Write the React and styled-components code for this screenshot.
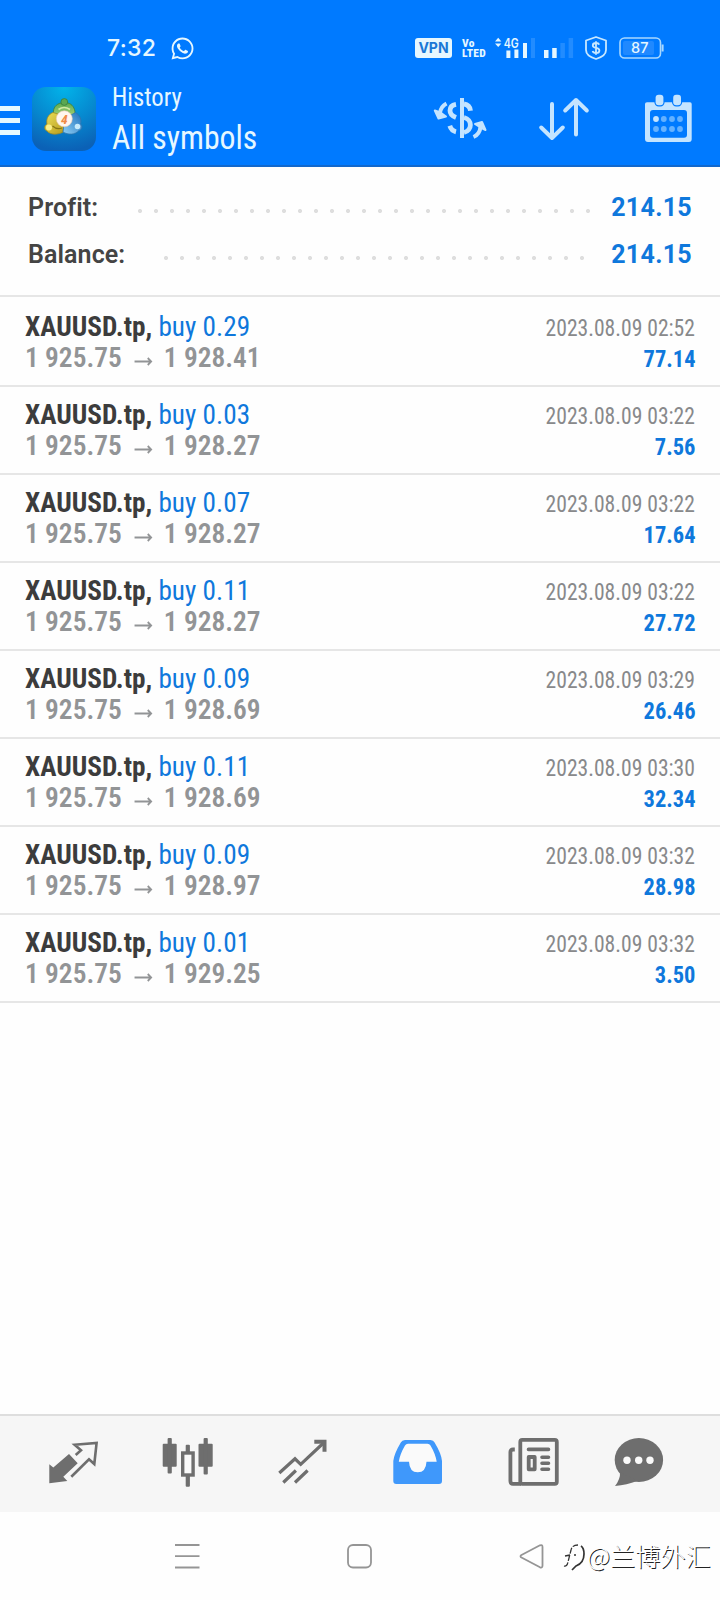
import React from 'react';
import styled, { createGlobalStyle } from 'styled-components'
import { FaWhatsapp } from 'react-icons/fa'

const GlobalStyle = createGlobalStyle`
    * {
        box-sizing: border-box;
    }

    body {
        margin: 0;
        background-color: #fefefe;
        font-family: "Roboto Condensed", Roboto, "Liberation Sans", sans-serif;
        font-stretch: 75%;
    }

    svg {
        display: block;
        flex-shrink: 0;
    }
`

const Screen = styled.div`
    width: 720px;
    height: 1600px;
    display: flex;
    flex-direction: column;
    overflow: hidden;
`

const Header = styled.header`
    height: 167px;
    background-color: #007aff;
    border-bottom: 2px solid #1268cc;
    color: #e6f7ff;
`

const StatusBar = styled.div`
    height: 84px;
    padding: 12px 56px 0 107px;
    display: flex;
    align-items: center;
    justify-content: space-between;
`

const StatusGroup = styled.div`
    display: flex;
    align-items: center;
    gap: ${props => props.gap}px;
`

const Clock = styled.span`
    font-family: Inter, sans-serif;
    font-size: 23px;
    font-weight: 500;
    line-height: 24px;
    width: 48px;
    letter-spacing: 0.3px;
    white-space: nowrap;
`

const VpnBadge = styled.span`
    width: 37px;
    height: 20px;
    border-radius: 3px;
    background-color: #e6f7ff;
    color: #1a78d6;
    font: 700 14px/20px Inter, sans-serif;
    text-align: center;
`

const Volte = styled.span`
    width: 23px;
    height: 20px;
    font-size: 11.5px;
    line-height: 10px;
    font-weight: 800;
    letter-spacing: 0.3px;
    white-space: pre;
`

const Toolbar = styled.div`
    height: 81px;
    display: flex;
    align-items: flex-start;
    padding-top: 3px;
`

const MenuButton = styled.div`
    width: 20px;
    margin-top: 19px;
    display: flex;
    flex-direction: column;
    gap: 7px;

    span {
        height: 5px;
        background-color: #e6f9ff;
    }
`

const AppLogo = styled.div`
    margin: 0 16px 0 12px;
`

const Titles = styled.div`
    flex: 1;
    display: flex;
    flex-direction: column;
`

const Subtitle = styled.span`
    font-size: 26px;
    line-height: 30px;
    margin-top: -5px;
    transform: scaleX(0.95);
    transform-origin: left;
`

const Title = styled.span`
    font-size: 34px;
    line-height: 40px;
    margin-top: 5px;
    transform: scaleX(0.935);
    transform-origin: left;
`

const Actions = styled.div`
    display: flex;
    padding: 5px 24px 0 0;
    gap: 48px;
`

const Summary = styled.section`
    height: 130px;
    padding: 17px 28px 0;
    border-bottom: 2px solid #e6e6e6;
`

const SummaryRow = styled.div`
    height: 47px;
    display: flex;
    align-items: center;
    font-family: Roboto, sans-serif;
    font-stretch: 100%;
    font-size: 25px;
    font-weight: 600;
    color: #444;
`

const SummaryLabel = styled.span`
    width: ${props => props.width}px;
    letter-spacing: 0.1px;
`

const Dots = styled.span`
    width: ${props => props.count * 16}px;
    height: 4px;
    margin-top: 7px;
    background: radial-gradient(circle at 2px 2px, #dedede 1.6px, transparent 2.4px) 0 0 / 16px 4px repeat-x;
`

const SummaryValue = styled.span`
    margin-left: auto;
    color: #0f78dc;
    font-weight: 700;
    letter-spacing: 0.3px;
`

const Deal = styled.div`
    height: ${props => props.first ? 90 : 88}px;
    padding: ${props => props.first ? 14 : 12}px 25px 0;
    border-bottom: 2px solid #e6e6e6;
    display: flex;
    justify-content: space-between;
`

const DealColumn = styled.div`
    display: flex;
    flex-direction: column;
    align-items: ${props => props.end ? 'flex-end' : 'flex-start'};
    white-space: nowrap;
`

const Symbol = styled.span`
    font-size: 28px;
    line-height: 31px;
    font-weight: 700;
    color: #3c3c3c;
    transform: scaleX(0.972);
    transform-origin: left;
`

const Volume = styled.span`
    font-weight: 400;
    color: #0f78dc;
`

const Prices = styled.span`
    font-size: 28px;
    line-height: 31px;
    font-weight: 600;
    color: #929496;
    display: flex;
    align-items: center;
    transform: scaleX(0.978);
    transform-origin: left;
`

const DealTime = styled.span`
    font-size: 24px;
    line-height: 31px;
    color: #88898b;
    margin-top: 2px;
    transform: scaleX(0.9);
    transform-origin: right;
`

const DealProfit = styled.span`
    font-size: 24px;
    line-height: 31px;
    font-weight: 700;
    color: #0f78dc;
    transform: scaleX(0.935);
    transform-origin: right;
`

const Spacer = styled.div`
    flex: 1;
`

const TabBar = styled.nav`
    height: 98px;
    background-color: #f6f6f6;
    border-top: 2px solid #dedede;
    display: grid;
    grid-template-columns: 114px 115px 115px 116px 105px auto;
    padding: 20px 0 0 48px;
`

const SystemBar = styled.div`
    height: 88px;
    padding: 29px 0 0 174px;
    display: flex;
    align-items: flex-start;
`

const SystemKey = styled.div`
    width: ${props => props.width}px;
`

const Watermark = styled.div`
    display: flex;
    margin-top: -1px;
    font: 300 25.200px/30px "Noto Sans CJK SC", sans-serif;
    color: #fff;
    text-shadow: 1px 1px 0 #222;
    white-space: nowrap;
`

const Bars = ({ levels }) => (
    <svg width="31" height="20" fill="#e6f7ff">
        <rect x="0" y="12" width="4.5" height="8" />
        <rect x="8.2" y="10" width="4.5" height="10" />
        <rect x="16.4" y="5" width="4.5" height="15" opacity={levels > 2 ? 1 : 0.15} />
        <rect x="24.6" y="0" width="4.5" height="20" opacity="0.15" />
    </svg>
)

const Network = () => (
    <svg width="39" height="22" fill="#e6f7ff" overflow="visible">
        <path d="M0 4.4L3.2 .8L6.4 4.4ZM0 6.4L3.2 10L6.4 6.4Z" />
        <text x="8.800" y="10.500" fontFamily="Inter, sans-serif" fontSize="12.5" fontWeight="600" textLength="15" lengthAdjust="spacingAndGlyphs">4G</text>
        <rect x="11.4" y="13.500" width="4" height="7.500" />
        <rect x="19.4" y="12.500" width="4" height="8.500" />
        <rect x="28" y="6" width="4" height="15" />
        <rect x="36" y="1" width="4" height="20" opacity="0.15" />
    </svg>
)

const Shield = () => (
    <svg width="24" height="24" fill="none" stroke="#c8e8ff" strokeWidth="1.8">
        <path d="M11 1L21 4.5V14C21 18.5 16 21.5 11 23C6 21.5 1 18.5 1 14V4.5Z" strokeLinejoin="round" />
        <path d="M14.2 8.6C13.8 7.6 12.6 7 11 7C9 7 7.8 8 7.8 9.4C7.8 13 14.4 10.8 14.4 14.4C14.4 16 13 17 11 17C9.2 17 8 16.2 7.6 15M11 5.3V18.7" />
    </svg>
)

const Battery = () => (
    <svg width="45" height="22">
        <rect x="1" y="1" width="40.5" height="20" rx="4.5" fill="none" stroke="#a8d8ff" strokeWidth="1.6" />
        <rect x="4" y="4" width="31" height="14" rx="2" fill="#2089ff" />
        <path d="M43.6 7.5V14.5" stroke="#a8d8ff" strokeWidth="2" />
        <text x="12" y="16" fontFamily="Inter, sans-serif" fontSize="14.5" fontWeight="500" fill="#e6f7ff">87</text>
    </svg>
)

const LogoIcon = () => (
    <svg width="64" height="64" viewBox="0 0 64 64">
        <defs>
            <radialGradient id="logoBg" cx="0.5" cy="0" r="1">
                <stop offset="0" stopColor="#02b4ea" />
                <stop offset="0.55" stopColor="#0688cf" />
                <stop offset="1" stopColor="#0b61b6" />
            </radialGradient>
            <linearGradient id="green" x1="0" y1="0" x2="0" y2="1">
                <stop offset="0" stopColor="#5dab52" />
                <stop offset="1" stopColor="#b4d87a" />
            </linearGradient>
            <linearGradient id="yellow" x1="0" y1="0" x2="1" y2="1">
                <stop offset="0" stopColor="#efe25a" />
                <stop offset="1" stopColor="#b59a1c" />
            </linearGradient>
            <linearGradient id="blue" x1="0" y1="1" x2="1" y2="0">
                <stop offset="0" stopColor="#8ed0f5" />
                <stop offset="1" stopColor="#1d70bd" />
            </linearGradient>
        </defs>
        <rect width="64" height="64" rx="14" fill="url(#logoBg)" />
        <path d="M29 16C24 17 21 21 21.500 26L27 32H38L43 26C43 21 40 17 36 16Z" fill="url(#green)" stroke="#3a7d3a" strokeWidth="0.800" />
        <circle cx="32.300" cy="15" r="3.400" fill="#5aa852" stroke="#3a7d3a" strokeWidth="0.800" />
        <path d="M26.500 22.500Q32 18.500 38 22.500" fill="none" stroke="#d2eba5" strokeWidth="1.600" />
        <path d="M21 25.500C16 27.500 14 32 15 37C12 38.500 12 43 15 44C18 48 26 48 31 45L32 37L26 27Z" fill="url(#yellow)" stroke="#a08c24" strokeWidth="0.800" />
        <circle cx="17" cy="40.500" r="3" fill="#f9ef8c" />
        <path d="M20.500 39Q25 43 30 41" fill="none" stroke="#867514" strokeWidth="1.200" />
        <path d="M43.500 25.500C48 28 50 33 48.500 37C51 39 50 43 47 43.500C43 48 36 48 31 45L32 37L39 28Z" fill="url(#blue)" stroke="#2f75ad" strokeWidth="0.800" />
        <circle cx="45.500" cy="39.500" r="2.800" fill="#c6eafb" />
        <circle cx="32.300" cy="31.800" r="8" fill="#fff6ee" stroke="#e6c8b0" strokeWidth="0.600" />
        <text x="32.300" y="36.500" textAnchor="middle" fontFamily="Roboto, sans-serif" fontStyle="italic" fontSize="13.500" fontWeight="700" fill="#f08a45">4</text>
    </svg>
)

const CurrencyIcon = () => (
    <svg width="60" height="52" fill="none" stroke="#c4e4ff" strokeWidth="4.800">
        <path d="M32 6V46" strokeWidth="4" />
        <path d="M26 12.300C22 13 20 15.500 20 18.500C20 22 22 24 26 25.500M34 12C38 12.500 40 15 40.500 18.800M34 25.500C42.500 27.500 42.500 38.500 34 40.500M26 39.800C22.500 39 21 37.500 19.800 33.800" />
        <path d="M16.500 11.500C12.500 13.500 10.500 17 10 21" strokeWidth="4" />
        <path d="M4.800 18.500L8.500 26.500L16 24.500L10.500 20.500Z" fill="#c4e4ff" strokeWidth="2" strokeLinejoin="round" />
        <path d="M43.500 45C48 43 50 39.500 50.500 35" strokeWidth="4" />
        <path d="M45 32L52 30L55.500 38L50.500 35.500Z" fill="#c4e4ff" strokeWidth="2" strokeLinejoin="round" />
    </svg>
)

const SortIcon = () => (
    <svg width="58" height="52" fill="none" stroke="#c4e4ff" strokeWidth="4" strokeLinecap="round" strokeLinejoin="round">
        <path d="M14 12V46M3.200 35.500L14 46L24.800 35.500" />
        <path d="M38 42.500V8M27.200 18.500L38 8L48.800 18.500" />
    </svg>
)

const CalendarIcon = () => (
    <svg width="52" height="52">
        <path d="M3 10.300H46Q47.700 10.300 47.700 12V47Q47.700 50 45 50H4Q1 50 1 47V12Q1 10.300 3 10.300ZM9 18Q6 18 6 21V42.700Q6 45.700 9 45.700H40Q43 45.700 43 42.700V21Q43 18 40 18Z" fill="#c4e4ff" fillRule="evenodd" />
        {[11.6, 29.2].map(x => (
            <rect key={x} x={x} y="2.800" width="7.800" height="10.500" rx="3" fill="#c4e4ff" stroke="#007aff" strokeWidth="2.400" paintOrder="stroke" />
        ))}
        {[27, 37].map(y => [12, 19.8, 28, 36].map((x, i) => (
            <circle key={x + '-' + y} cx={x} cy={y} r="2.900" fill={y === 27 && i === 0 ? '#c4e4ff' : '#64b1ff'} />
        )))}
    </svg>
)

const QuotesIcon = () => (
    <svg width="52" height="52">
        <path d="M1.300 28.300V47.300L19.300 45L15.300 40.700L29.700 27.300L21 18L5.300 31.500Z" fill="#6e6e6e" />
        <path d="M27.700 19L33 14.300L26.600 8.700L48.600 6.900L46.300 28L41 23.300L23.300 40.700" fill="none" stroke="#6e6e6e" strokeWidth="2.600" />
    </svg>
)

const ChartIcon = () => (
    <svg width="52" height="52" fill="#6e6e6e">
        <rect x="0.700" y="7.700" width="14" height="23" rx="1" />
        <rect x="5.600" y="2" width="4.200" height="35.500" rx="1" />
        <rect x="23.700" y="8.700" width="4.200" height="42" rx="1" />
        <rect x="20.700" y="17" width="10.400" height="22" fill="#fafafa" stroke="#6e6e6e" strokeWidth="3.400" />
        <rect x="36.500" y="7.700" width="14.200" height="23" rx="1" />
        <rect x="41.600" y="2" width="4.200" height="36.500" rx="1" />
    </svg>
)

const TradeIcon = () => (
    <svg width="52" height="52" fill="none" stroke="#6e6e6e" strokeWidth="3.200">
        <path d="M2.300 37L18 22.800L23.700 28.300L47 6.500M6.300 46.500L18.900 34.500M18 46.500L30.600 34.500" />
        <path d="M37.300 5.800H47.500V15.800" strokeWidth="4" />
    </svg>
)

const HistoryIcon = () => (
    <svg width="52" height="52">
        <path d="M13 4H38.500Q41.500 4 42.600 6.500Q49.500 18 50 25V45Q50 48 47 48H4.300Q1.300 48 1.300 45V25Q2 18 8.800 6.500Q10 4 13 4Z" fill="#3f98fb" />
        <path d="M16 7.700H35.500Q37.500 7.700 38.500 9.500Q43.500 18 44.700 25.700H34.500Q34 36.300 25.700 36.300Q17.500 36.300 17 25.700H6.800Q8 18 13 9.500Q14 7.700 16 7.700Z" fill="#fafafa" />
    </svg>
)

const NewsIcon = () => (
    <svg width="52" height="52" fill="none" stroke="#6e6e6e" strokeWidth="3.800" strokeLinejoin="round">
        <rect x="12.300" y="3.900" width="36.500" height="43.900" rx="2" />
        <path d="M6.800 13.500H5Q2.400 13.500 2.400 16V45Q2.400 47.800 5 47.800H13" />
        <path d="M20.500 13.400H40.500M34 21.200H40.500M34 27.200H40.500M34 33.200H40.500" strokeWidth="3.600" strokeLinecap="round" />
        <rect x="20.700" y="21" width="6" height="12.300" />
    </svg>
)

const MessagesIcon = () => (
    <svg width="52" height="52" fill="#6e6e6e">
        <ellipse cx="25.900" cy="24" rx="24.200" ry="22" />
        <path d="M7 36Q7.500 43 2 50Q14 49 24 45Z" />
        {[14, 25.7, 37].map(x => <circle key={x} cx={x} cy="24.300" r="3.700" fill="#fafafa" />)}
    </svg>
)

const WatermarkLogo = () => (
    <svg width="25" height="34" fill="none" stroke="#333">
        <path d="M2 26Q5 27 6 22L9 10Q10 5 16 5M3 16L8 15M12 15H14" strokeWidth="1.300" strokeDasharray="6 1.500" />
        <path d="M19 6Q22 8 22 14Q22 23 14 26L10 30" strokeWidth="1.700" />
    </svg>
)

const deals = [
    { volume: '0.29', close: '1 928.41', time: '02:52', profit: '77.14' },
    { volume: '0.03', close: '1 928.27', time: '03:22', profit: '7.56' },
    { volume: '0.07', close: '1 928.27', time: '03:22', profit: '17.64' },
    { volume: '0.11', close: '1 928.27', time: '03:22', profit: '27.72' },
    { volume: '0.09', close: '1 928.69', time: '03:29', profit: '26.46' },
    { volume: '0.11', close: '1 928.69', time: '03:30', profit: '32.34' },
    { volume: '0.09', close: '1 928.97', time: '03:32', profit: '28.98' },
    { volume: '0.01', close: '1 929.25', time: '03:32', profit: '3.50' },
]

const Arrow = () => (
    <svg width="43" height="16" fill="none" stroke="#929496" strokeWidth="1.800">
        <path d="M13 11.500H30M26.500 8L30 11.500L26.500 15" />
    </svg>
)

class App extends React.Component {
    render() {
        return (
            <Screen>
                <GlobalStyle />
                <Header>
                    <StatusBar>
                        <StatusGroup gap={15}>
                            <Clock>7:32</Clock>
                            <FaWhatsapp size={25} />
                        </StatusGroup>
                        <StatusGroup gap={10}>
                            <VpnBadge>VPN</VpnBadge>
                            <Volte>{'Vo\nLTED'}</Volte>
                            <Network />
                            <Bars levels={2} />
                            <Shield />
                            <Battery />
                        </StatusGroup>
                    </StatusBar>
                    <Toolbar>
                        <MenuButton><span /><span /><span /></MenuButton>
                        <AppLogo><LogoIcon /></AppLogo>
                        <Titles>
                            <Subtitle>History</Subtitle>
                            <Title>All symbols</Title>
                        </Titles>
                        <Actions>
                            <CurrencyIcon />
                            <SortIcon />
                            <CalendarIcon />
                        </Actions>
                    </Toolbar>
                </Header>

                <Summary>
                    <SummaryRow>
                        <SummaryLabel width={110}>Profit:</SummaryLabel>
                        <Dots count={29} />
                        <SummaryValue>214.15</SummaryValue>
                    </SummaryRow>
                    <SummaryRow>
                        <SummaryLabel width={136}>Balance:</SummaryLabel>
                        <Dots count={27} />
                        <SummaryValue>214.15</SummaryValue>
                    </SummaryRow>
                </Summary>

                {deals.map((deal, i) => (
                    <Deal key={i} first={i === 0 ? 1 : 0}>
                        <DealColumn>
                            <Symbol>XAUUSD.tp, <Volume>buy {deal.volume}</Volume></Symbol>
                            <Prices>1 925.75<Arrow />{deal.close}</Prices>
                        </DealColumn>
                        <DealColumn end={1}>
                            <DealTime>2023.08.09 {deal.time}</DealTime>
                            <DealProfit>{deal.profit}</DealProfit>
                        </DealColumn>
                    </Deal>
                ))}

                <Spacer />

                <TabBar>
                    <QuotesIcon />
                    <ChartIcon />
                    <TradeIcon />
                    <HistoryIcon />
                    <NewsIcon />
                    <MessagesIcon />
                </TabBar>
                <SystemBar>
                    <SystemKey width={172}>
                        <svg width="28" height="32" fill="none" stroke="#959595" strokeWidth="1.800">
                            <path d="M1 4H25.500M1 15.200H25.500M1 26.500H25.500" />
                        </svg>
                    </SystemKey>
                    <SystemKey width={173}>
                        <svg width="28" height="32" fill="none" stroke="#959595" strokeWidth="1.800">
                            <rect x="2" y="4" width="23" height="22.500" rx="5" />
                        </svg>
                    </SystemKey>
                    <SystemKey width={43}>
                        <svg width="28" height="32" fill="none" stroke="#959595" strokeWidth="1.800" strokeLinejoin="round">
                            <path d="M2 14.300L21 4.300Q23.500 3.300 23.500 6V24.500Q23.500 27.300 21 26.300L2 16.300Q1 15.300 2 14.300Z" />
                        </svg>
                    </SystemKey>
                    <Watermark>
                        <WatermarkLogo />
                        <span>@兰博外汇</span>
                    </Watermark>
                </SystemBar>
            </Screen>
        )
    }
}

export default App;
